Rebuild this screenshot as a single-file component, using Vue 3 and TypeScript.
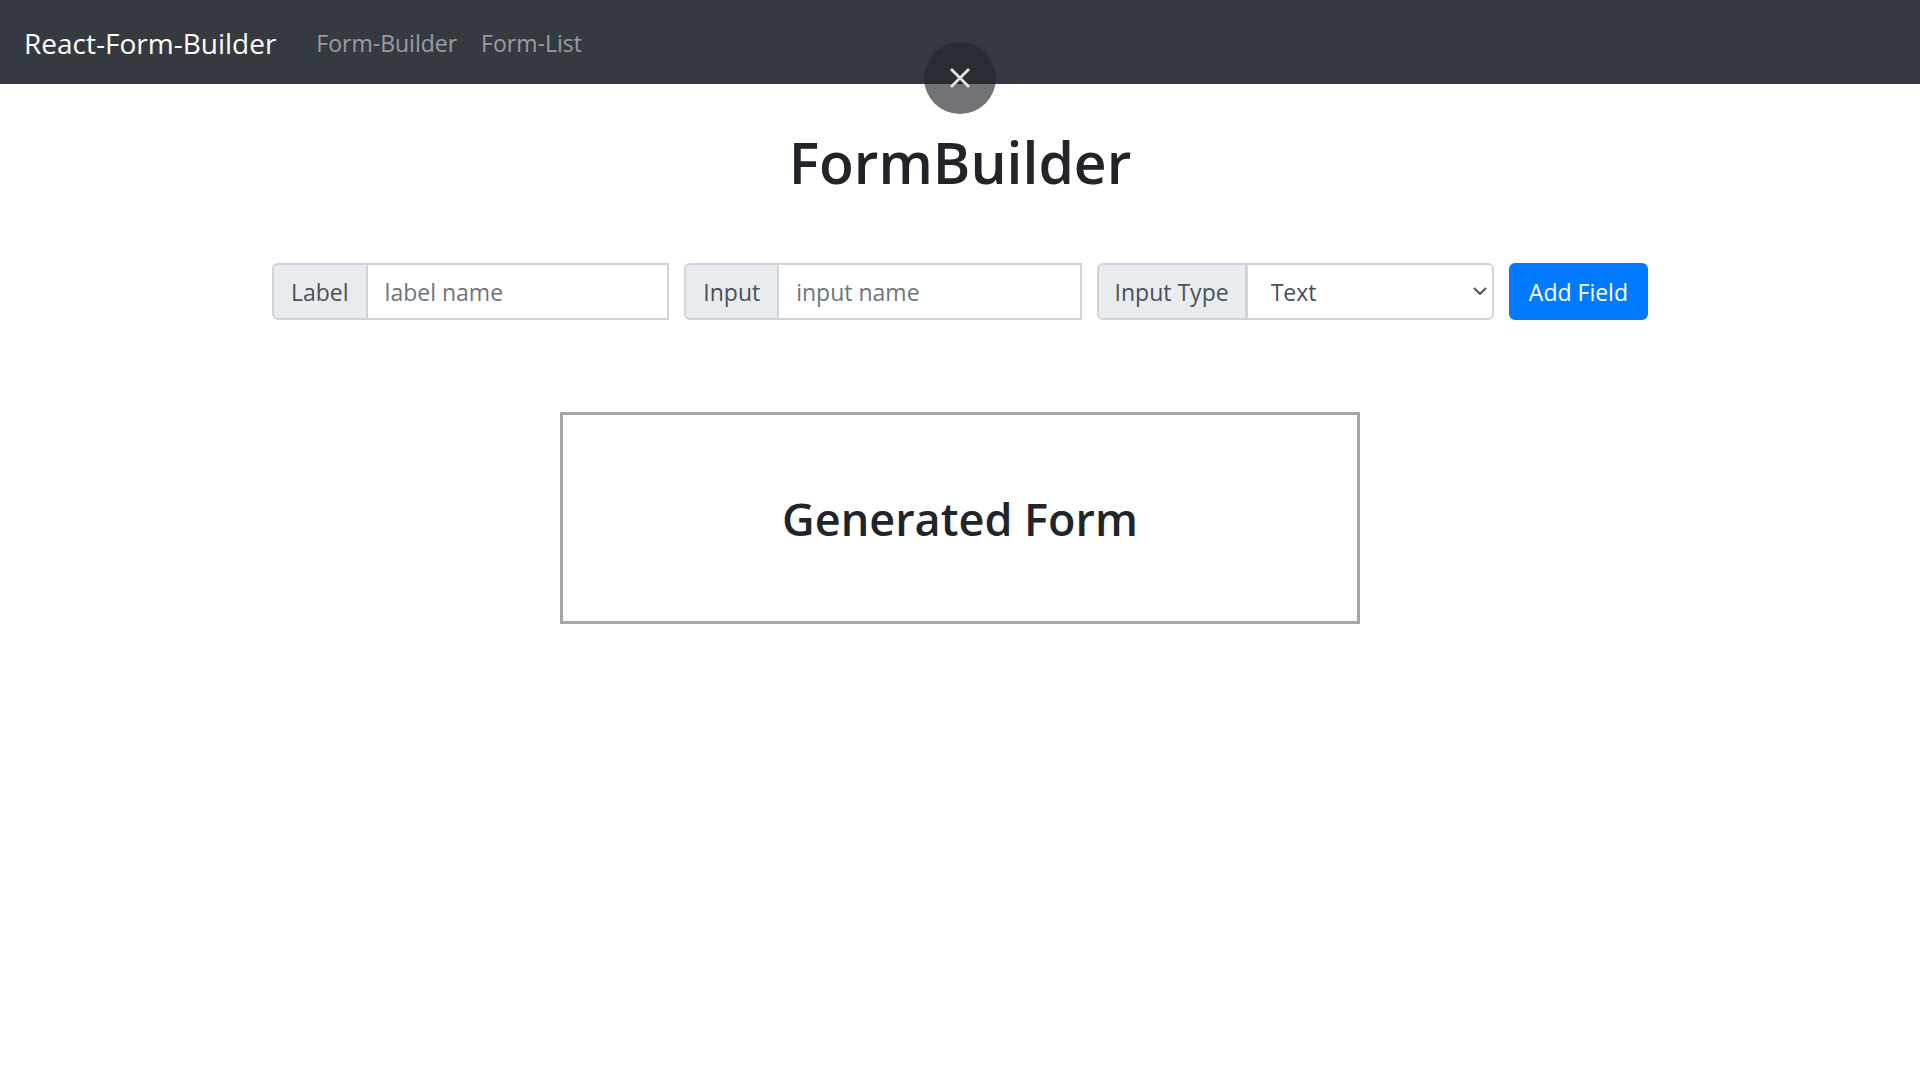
<script setup lang="ts">
import { ref } from 'vue'

const labelName = ref('')
const inputName = ref('')
const inputType = ref('Text')
const inputTypes: string[] = ['Text', 'Number', 'Email', 'Password', 'Checkbox']
const overlayOpen = ref(true)
</script>

<template>
  <div class="page">
    <nav class="navbar">
      <a class="brand" href="#">React-Form-Builder</a>
      <a class="nav-link" href="#builder">Form-Builder</a>
      <a class="nav-link" href="#list">Form-List</a>
    </nav>

    <button v-if="overlayOpen" class="close" type="button" aria-label="Close" @click="overlayOpen = false">
      <svg width="20" height="20" viewBox="0 0 20 20" aria-hidden="true">
        <path d="M1 1L19 19M19 1L1 19" fill="none" stroke="#e3e3e4" stroke-width="2.8" />
      </svg>
    </button>

    <main class="content">
      <h1 class="title">FormBuilder</h1>

      <form class="fields" @submit.prevent>
        <div class="group">
          <label class="addon" for="label-name">Label</label>
          <input id="label-name" v-model="labelName" class="control" type="text" placeholder="label name" />
        </div>
        <div class="group">
          <label class="addon" for="input-name">Input</label>
          <input id="input-name" v-model="inputName" class="control" type="text" placeholder="input name" />
        </div>
        <div class="group">
          <label class="addon addon-select" for="input-type">Input Type</label>
          <div class="select-wrap">
            <select id="input-type" v-model="inputType" class="control select">
              <option v-for="type in inputTypes" :key="type">{{ type }}</option>
            </select>
            <svg class="chevron" width="14" height="8" viewBox="0 0 14 8" aria-hidden="true">
              <path d="M1 1L7 7L13 1" fill="none" stroke="#495057" stroke-width="2" />
            </svg>
          </div>
        </div>
        <button class="add" type="submit">Add Field</button>
      </form>

      <section class="generated">
        <h2 class="subtitle">Generated Form</h2>
      </section>
    </main>
  </div>
</template>

<style>
body {
  margin: 0;
  background: #fff;
}
</style>

<style scoped>
.page,
.page * {
  box-sizing: border-box;
}

.page {
  font-family: "Open Sans", "Noto Sans", sans-serif;
  font-size: 23px;
  line-height: 36px;
  color: #212529;
}

.navbar {
  display: flex;
  align-items: center;
  gap: 24px;
  height: 84px;
  padding: 2px 24px 0;
  background: #343a40;
}

.brand {
  margin-right: 16px;
  font-size: 28px;
  color: #fff;
  text-decoration: none;
}

.nav-link {
  color: rgba(255, 255, 255, 0.5);
  text-decoration: none;
}

.close {
  position: fixed;
  top: 42px;
  left: 50%;
  display: flex;
  align-items: center;
  justify-content: center;
  width: 72px;
  height: 72px;
  margin-left: -36px;
  padding: 0;
  border: 0;
  border-radius: 50%;
  background: rgba(36, 38, 44, 0.65);
}

.content {
  display: flex;
  flex-direction: column;
  align-items: center;
  padding: 42px 24px;
}

.title {
  margin: 0;
  font-size: 57px;
  font-weight: 600;
  line-height: 72px;
}

.fields {
  display: flex;
  gap: 15px;
  width: 100%;
  max-width: 1376px;
  margin-top: 65px;
}

.group {
  display: flex;
  flex: 1 1 0;
  min-width: 0;
}

.addon {
  display: flex;
  align-items: center;
  flex: none;
  padding: 0 17px;
  border: 2px solid #ced4da;
  border-right: 0;
  border-radius: 6px 0 0 6px;
  background: #e9ecef;
  color: #495057;
}

.addon-select {
  padding: 0 16px;
  border-right: 1px solid #ced4da;
}

.control {
  flex: 1;
  width: 100%;
  min-width: 0;
  height: 57px;
  margin: 0;
  padding: 0 17px;
  border: 2px solid #ced4da;
  border-radius: 0;
  background: #fff;
  color: #495057;
  font: inherit;
}

.control::placeholder {
  color: #6c757d;
  opacity: 1;
}

.select-wrap {
  position: relative;
  flex: 1;
  min-width: 0;
}

.select {
  display: block;
  padding: 0 23px;
  border-radius: 0 6px 6px 0;
  appearance: none;
}

.chevron {
  position: absolute;
  top: 24px;
  right: 7px;
  pointer-events: none;
}

.add {
  flex: none;
  height: 57px;
  padding: 0 18px;
  border: 2px solid #007bff;
  border-radius: 6px;
  background: #007bff;
  color: #fff;
  font: inherit;
}

.generated {
  width: 100%;
  max-width: 800px;
  margin-top: 92px;
  padding: 76px 24px 74px;
  border: 3px solid #a6a6a6;
  text-align: center;
}

.subtitle {
  margin: 0;
  font-size: 45px;
  font-weight: 600;
  line-height: 56px;
}
</style>
